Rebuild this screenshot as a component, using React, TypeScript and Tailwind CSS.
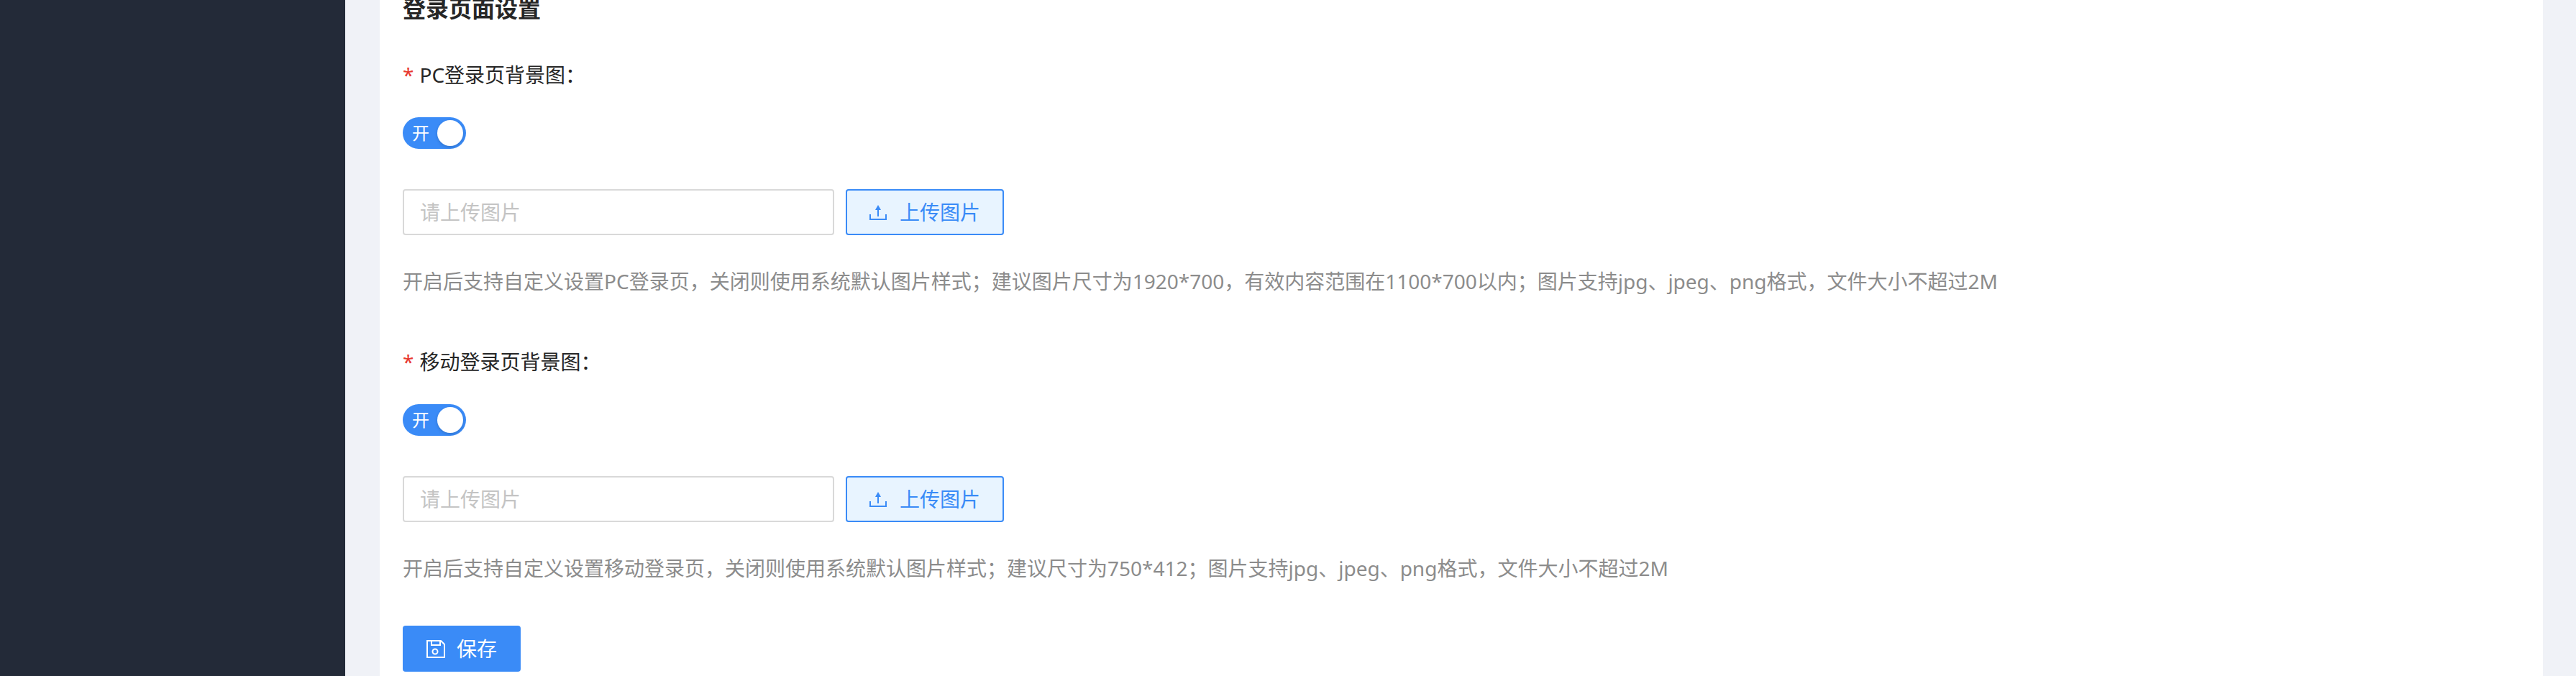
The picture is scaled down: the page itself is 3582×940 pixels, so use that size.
import React from 'react';

const FONT = "font-['Noto_Sans','Noto_Sans_CJK_SC',sans-serif]";

const UploadIcon = () => (
  <svg width="24" height="22" viewBox="0 0 24 22" fill="none" stroke="currentColor" strokeWidth="2">
    <path d="M1 14v7h22v-7" />
    <path d="M12 17V6" />
    <path d="M8 8l4-7 4 7z" fill="currentColor" stroke="none" />
  </svg>
);

const SaveIcon = () => (
  <svg width="26" height="25" viewBox="0 0 26 25" fill="none" stroke="currentColor" strokeWidth="2">
    <path d="M1 1h19l5 5v18H1z" />
    <path d="M7 1v6h12V1" />
    <circle cx="12" cy="16" r="3.5" />
  </svg>
);

// one switch + upload row + hint block
const UploadField = ({ label, hint }: { label: string; hint: string }) => (
  <div className="flex flex-col">
    <div className="h-[40px] flex items-center text-[28px] leading-[40px] text-[#262626]">
      <span className="text-[#e8392f] mr-[8px]">*</span>
      {label}：
    </div>
    <div className="mt-[39px] w-[88px] h-[44px] rounded-full bg-[#3a8bf7] flex items-center justify-between pl-[13px] pr-[4px]">
      <span className="text-[24px] leading-none text-white">开</span>
      <span className="w-[36px] h-[36px] rounded-full bg-white shadow-[0_2px_4px_rgba(0,0,0,0.15)]"></span>
    </div>
    <div className="mt-[56px] flex gap-[16px]">
      <div className="w-[600px] h-[64px] border-2 border-[#d9d9d9] rounded-[4px] bg-white flex items-center px-[22px] text-[28px] text-[#c4c4c4]">
        请上传图片
      </div>
      <button className="w-[220px] h-[64px] border-2 border-[#3a8bf7] rounded-[4px] bg-[#e8f4ff] flex items-center justify-center gap-[18px] text-[28px] text-[#3a8bf7]">
        <UploadIcon />
        上传图片
      </button>
    </div>
    <p className="mt-[44px] text-[28px] leading-[40px] text-[#8c8c8c]">{hint}</p>
  </div>
);

export default function App() {
  return (
    <div className={`${FONT} w-[3582px] h-[940px] overflow-hidden flex bg-[#f0f2f7]`}>
      <aside className="w-[480px] shrink-0 bg-[#232a38]"></aside>
      <main className="ml-[48px] w-[3008px] h-full bg-white px-[32px] flex flex-col">
        <h2 className="-mt-[8px] h-[40px] text-[32px] leading-[40px] font-bold text-[#262626]">登录页面设置</h2>
        <div className="mt-[52px] flex flex-col gap-[72px]">
          <UploadField
            label="PC登录页背景图"
            hint="开启后支持自定义设置PC登录页，关闭则使用系统默认图片样式；建议图片尺寸为1920*700，有效内容范围在1100*700以内；图片支持jpg、jpeg、png格式，文件大小不超过2M"
          />
          <UploadField
            label="移动登录页背景图"
            hint="开启后支持自定义设置移动登录页，关闭则使用系统默认图片样式；建议尺寸为750*412；图片支持jpg、jpeg、png格式，文件大小不超过2M"
          />
        </div>
        <button className="mt-[60px] w-[164px] h-[64px] rounded-[4px] bg-[#3a8bf7] flex items-center justify-center gap-[16px] text-[28px] text-white">
          <SaveIcon />
          保存
        </button>
      </main>
    </div>
  );
}
